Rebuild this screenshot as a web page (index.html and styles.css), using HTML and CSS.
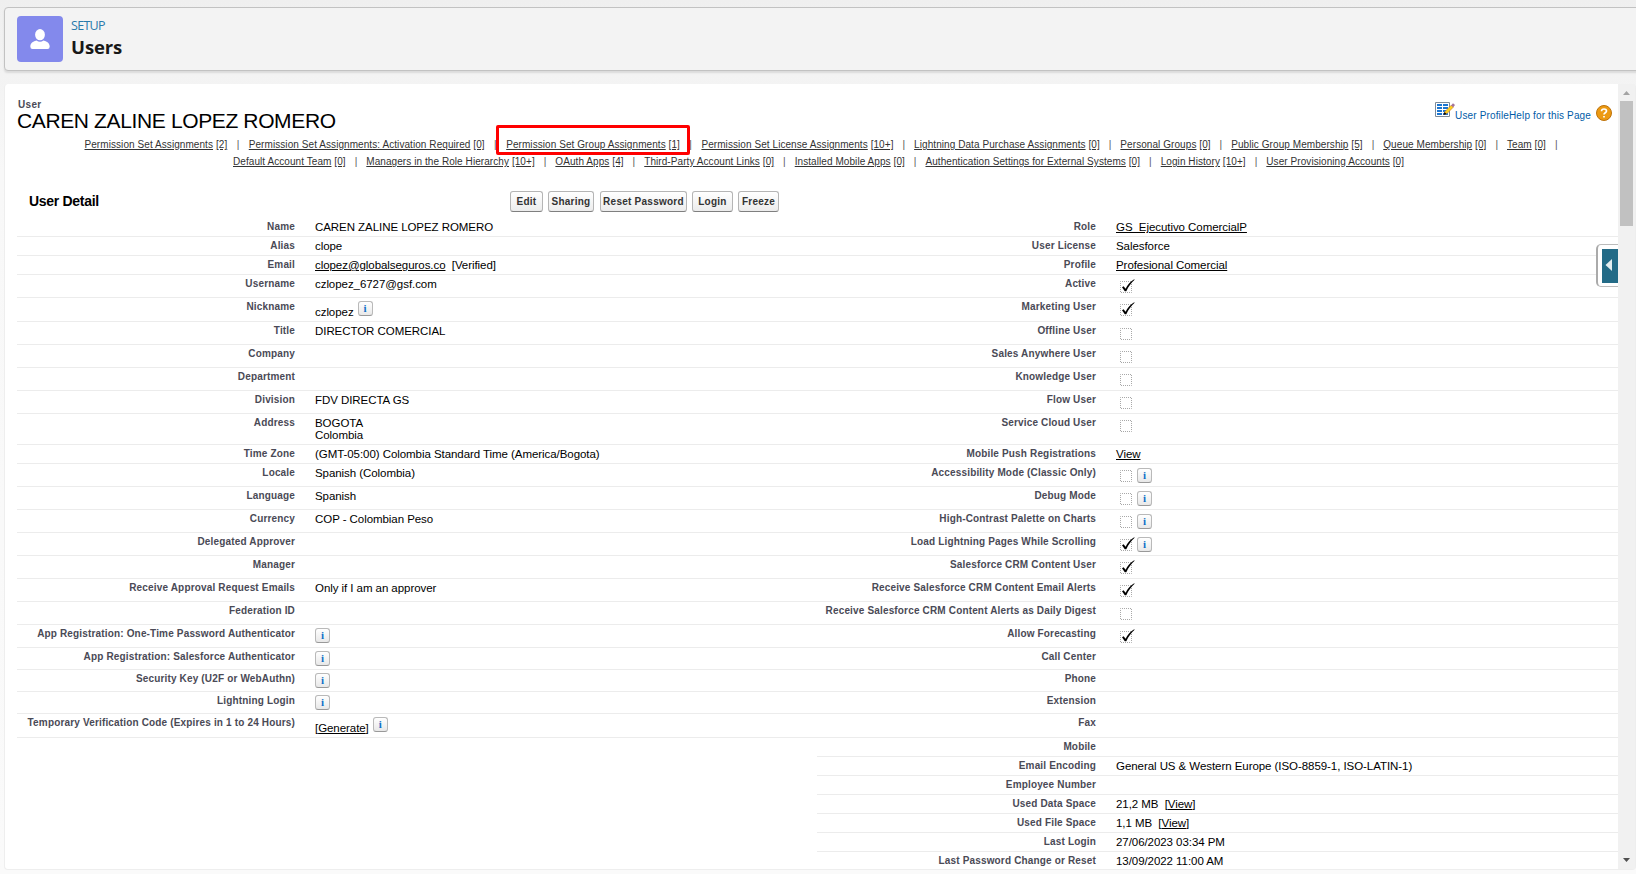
FILE: index.html
```html
<!DOCTYPE html>
<html lang="en">
<head>
<meta charset="utf-8">
<title>Users</title>
<link rel="stylesheet" href="styles.css">
</head>
<body>
<svg class="defs" width="0" height="0" aria-hidden="true">
  <symbol id="off" viewBox="0 0 21 16"><rect x="4.5" y="3.5" width="11" height="11" fill="none" stroke="#a8a8a8" stroke-dasharray="1 1" stroke-dashoffset=".5"/></symbol>
  <symbol id="on" viewBox="0 0 21 16"><rect x="4.5" y="3.5" width="11" height="11" fill="none" stroke="#a8a8a8" stroke-dasharray="1 1" stroke-dashoffset=".5"/><path d="M6 9.2 L7.6 8.2 L9.6 10.8 C11.5 6.8 14 3.6 18.2 1.2 L18.6 1.8 C15 5 12.600 8.500 10.300 13.200 L8.800 13.200 Z" fill="#000"/></symbol>
</svg>
<header class="setup">
  <svg class="setup-icon" viewBox="0 0 46 46"><ellipse cx="23" cy="18.700" rx="4.900" ry="5.600" fill="#fff"/><path d="M13.300 30.500 C13.300 26 18 25 19.500 24.500 Q23 27 26.500 24.500 C28 25 32.700 26 32.700 30.500 Q32.700 33 30.500 33 H15.500 Q13.300 33 13.300 30.500Z" fill="#fff"/></svg>
  <div class="setup-text"><span class="setup-kicker">SETUP</span><h1>Users</h1></div>
</header>
<div class="frame">
<main class="page">
  <div class="title-row">
    <div><div class="type">User</div><h2>CAREN ZALINE LOPEZ ROMERO</h2></div>
    <div class="help">
      <svg class="edit" width="20" height="16" viewBox="0 0 20 16"><path d="M.5.500h14v14H.5z" fill="#fff" stroke="#7d8a98"/><path d="M2 2h5v2H2zM8 2h5v2H8zM2 5h5v2H2zM8 5h5v2H8zM2 8h5v2H2zM8 8h4v2H8zM2 11h5v2H2zM8 11h5v2H8z" fill="#1b75d0"/><path d="M9 12.500 L10 9.500 L16.500 3 L18.500 5 L12 11.500Z" fill="#ffd21c" stroke="#c8702a" stroke-width=".6"/><path d="M16 3.500 L18 1.200 L20 3 L18.200 5.200Z" fill="#a5759b"/><path d="M8.500 13 L9.500 10 L11.500 12Z" fill="#000"/></svg>
      <a>User Profile</a><a>Help for this Page</a>
      <svg class="q" width="16" height="16" viewBox="0 0 16 16"><circle cx="8" cy="8" r="7.500" fill="#ec9a12" stroke="#bd720b"/><path d="M5.500 6.200 C5.600 3.300 10.500 3.300 10.500 6 C10.500 7.800 8 7.600 8 9.600 M8 11v1.500" fill="none" stroke="#fff" stroke-width="1.700"/></svg>
    </div>
  </div>
  <nav class="links">
    <div class="line one"><span><a>Permission Set Assignments</a> <a>[2]</a></span><i>|</i><span><a>Permission Set Assignments: Activation Required</a> <a>[0]</a></span><i>|</i><span class="marked"><a>Permission Set Group Assignments</a> <a>[1]</a></span><i>|</i><span><a>Permission Set License Assignments</a> <a>[10+]</a></span><i>|</i><span><a>Lightning Data Purchase Assignments</a> <a>[0]</a></span><i>|</i><span><a>Personal Groups</a> <a>[0]</a></span><i>|</i><span><a>Public Group Membership</a> <a>[5]</a></span><i>|</i><span><a>Queue Membership</a> <a>[0]</a></span><i>|</i><span><a>Team</a> <a>[0]</a></span><i>|</i></div>
    <div class="line two"><span><a>Default Account Team</a> <a>[0]</a></span><i>|</i><span><a>Managers in the Role Hierarchy</a> <a>[10+]</a></span><i>|</i><span><a>OAuth Apps</a> <a>[4]</a></span><i>|</i><span><a>Third-Party Account Links</a> <a>[0]</a></span><i>|</i><span><a>Installed Mobile Apps</a> <a>[0]</a></span><i>|</i><span><a>Authentication Settings for External Systems</a> <a>[0]</a></span><i>|</i><span><a>Login History</a> <a>[10+]</a></span><i>|</i><span><a>User Provisioning Accounts</a> <a>[0]</a></span></div>
  </nav>
  <div class="detail-head"><h3>User Detail</h3><div class="buttons"><button class="b1">Edit</button><button class="b2">Sharing</button><button class="b3">Reset Password</button><button class="b4">Login</button><button class="b5">Freeze</button></div></div>
  <section class="detail">
    <div class="row h19"><b>Name</b><p>CAREN ZALINE LOPEZ ROMERO</p><b>Role</b><p><a>GS_Ejecutivo ComercialP</a></p></div>
    <div class="row h19"><b>Alias</b><p>clope</p><b>User License</b><p>Salesforce</p></div>
    <div class="row h19"><b>Email</b><p><a>clopez@globalseguros.co</a>&nbsp; [Verified]</p><b>Profile</b><p><a>Profesional Comercial</a></p></div>
    <div class="row"><b>Username</b><p>czlopez_6727@gsf.com</p><b>Active</b><p class="box"><svg><use href="#on"/></svg></p></div>
    <div class="row h24"><b>Nickname</b><p class="low"><span>czlopez</span><em>i</em></p><b>Marketing User</b><p class="box"><svg><use href="#on"/></svg></p></div>
    <div class="row"><b>Title</b><p>DIRECTOR COMERCIAL</p><b>Offline User</b><p class="box"><svg><use href="#off"/></svg></p></div>
    <div class="row"><b>Company</b><p></p><b>Sales Anywhere User</b><p class="box"><svg><use href="#off"/></svg></p></div>
    <div class="row"><b>Department</b><p></p><b>Knowledge User</b><p class="box"><svg><use href="#off"/></svg></p></div>
    <div class="row"><b>Division</b><p>FDV DIRECTA GS</p><b>Flow User</b><p class="box"><svg><use href="#off"/></svg></p></div>
    <div class="row h31"><b>Address</b><p>BOGOTA<br>Colombia</p><b>Service Cloud User</b><p class="box"><svg><use href="#off"/></svg></p></div>
    <div class="row h19"><b>Time Zone</b><p>(GMT-05:00) Colombia Standard Time (America/Bogota)</p><b>Mobile Push Registrations</b><p><a>View</a></p></div>
    <div class="row"><b>Locale</b><p>Spanish (Colombia)</p><b>Accessibility Mode (Classic Only)</b><p class="box"><svg><use href="#off"/></svg><em>i</em></p></div>
    <div class="row"><b>Language</b><p>Spanish</p><b>Debug Mode</b><p class="box"><svg><use href="#off"/></svg><em>i</em></p></div>
    <div class="row"><b>Currency</b><p>COP - Colombian Peso</p><b>High-Contrast Palette on Charts</b><p class="box"><svg><use href="#off"/></svg><em>i</em></p></div>
    <div class="row"><b>Delegated Approver</b><p></p><b>Load Lightning Pages While Scrolling</b><p class="box"><svg><use href="#on"/></svg><em>i</em></p></div>
    <div class="row"><b>Manager</b><p></p><b>Salesforce CRM Content User</b><p class="box"><svg><use href="#on"/></svg></p></div>
    <div class="row"><b>Receive Approval Request Emails</b><p>Only if I am an approver</p><b>Receive Salesforce CRM Content Email Alerts</b><p class="box"><svg><use href="#on"/></svg></p></div>
    <div class="row"><b>Federation ID</b><p></p><b>Receive Salesforce CRM Content Alerts as Daily Digest</b><p class="box"><svg><use href="#off"/></svg></p></div>
    <div class="row"><b>App Registration: One-Time Password Authenticator</b><p class="low"><em>i</em></p><b>Allow Forecasting</b><p class="box"><svg><use href="#on"/></svg></p></div>
    <div class="row h22"><b>App Registration: Salesforce Authenticator</b><p class="low"><em>i</em></p><b>Call Center</b><p></p></div>
    <div class="row h22"><b>Security Key (U2F or WebAuthn)</b><p class="low"><em>i</em></p><b>Phone</b><p></p></div>
    <div class="row h22"><b>Lightning Login</b><p class="low"><em>i</em></p><b>Extension</b><p></p></div>
    <div class="row h24"><b>Temporary Verification Code (Expires in 1 to 24 Hours)</b><p class="low"><span>[<a>Generate</a>]</span><em>i</em></p><b>Fax</b><p></p></div>
    <div class="row h19 half"><b>Mobile</b><p></p></div>
    <div class="row h19 half"><b>Email Encoding</b><p>General US &amp; Western Europe (ISO-8859-1, ISO-LATIN-1)</p></div>
    <div class="row h19 half"><b>Employee Number</b><p></p></div>
    <div class="row h19 half"><b>Used Data Space</b><p>21,2 MB&nbsp; [<a>View</a>]</p></div>
    <div class="row h19 half"><b>Used File Space</b><p>1,1 MB&nbsp; [<a>View</a>]</p></div>
    <div class="row h19 half"><b>Last Login</b><p>27/06/2023 03:34 PM</p></div>
    <div class="row h19 half"><b>Last Password Change or Reset</b><p>13/09/2022 11:00 AM</p></div>
  </section>
  <div class="drawer"><div class="drawer-in"><svg width="8" height="13" viewBox="0 0 8 13"><path d="M7 0v12L.5 6z" fill="#e4eef0"/></svg></div></div>
</main>
<div class="scroll"><svg width="16" height="16"><path d="M5 11h7L8.500 7z" fill="#a3a3a3"/></svg><div class="thumb"></div><svg class="down" width="16" height="16"><path d="M5 5h7L8.500 9z" fill="#505050"/></svg></div>
</div>
</body>
</html>
```
FILE: styles.css
```css
*, *::before { box-sizing: border-box; }
html, body { height: 100%; }
body { margin: 0; padding: 7px 0 0 4px; overflow: hidden; background: linear-gradient(#efefef, #f8f8f8 170px, #fafafa); font-family: "Liberation Sans", Arial, sans-serif; color: #000; }
h1, h2, h3, p { margin: 0; font-weight: normal; }
.defs { position: absolute; }
.setup { display: flex; height: 64px; width: 1640px; padding: 8px 0 0 12px; border: 1px solid #c2c2c2; border-radius: 4px; background: #f3f3f3; box-shadow: 0 2px 2px rgba(0,0,0,.1); }
.setup-icon { width: 46px; height: 46px; border-radius: 4px; background: #8389ec; }
.setup-text { padding-left: 8px; font-family: "Open Sans", "Noto Sans", sans-serif; }
.setup-kicker { display: block; height: 18px; font-size: 12.5px; line-height: 19px; letter-spacing: -.7px; color: #2a7aab; }
h1 { font-size: 18.5px; line-height: 26px; font-weight: bold; letter-spacing: -.1px; color: #181818; }
.frame { display: flex; width: 1632px; height: 786px; margin-top: 13px; border: 1px solid #eee; border-top: 0; border-radius: 4px; background: #fff; }
.page { position: relative; flex: none; width: 1613px; overflow: hidden; padding-left: 12px; }
.title-row { display: flex; justify-content: space-between; height: 52px; padding: 14px 6px 0 0; }
.type { padding-left: 1px; font-size: 10px; line-height: 13px; font-weight: bold; letter-spacing: .3px; color: #4a4a56; }
h2 { font-size: 21px; line-height: 20px; letter-spacing: -.37px; }
.help { display: flex; font-size: 10px; line-height: 14px; letter-spacing: .14px; color: #015ba7; padding-top: 4px; }
.help a { padding-top: 7px; }
.q { margin: 3px 0 0 5px; }
.links { height: 50px; font-size: 10px; line-height: 17px; color: #333; letter-spacing: .07px; }
.line { display: flex; white-space: nowrap; }
.line.one { padding-left: 67.500px; }
.line.two { padding-left: 216px; }
.line i { width: 21.500px; text-align: center; font-style: normal; color: #555; }
.line.one i:nth-of-type(n+4), .line.two i { width: 20.600px; }
.links a, .detail a { text-decoration: underline; }
.marked { position: relative; }
.marked::before { content: ""; position: absolute; left: -10px; top: -11px; width: 194px; height: 30px; border: 3px solid #f00; border-radius: 2px; }
.detail-head { display: flex; height: 32px; }
h3 { width: 493px; padding-left: 12px; font-size: 14px; line-height: 31px; font-weight: bold; letter-spacing: -.3px; }
.buttons { display: flex; gap: 5px; padding-top: 5px; }
button { height: 21px; padding: 0; border: 1px solid #b5b5b5; border-bottom-color: #7f7f7f; border-radius: 3px; background: linear-gradient(#fff, #ececec); font: bold 10px/17px "Liberation Sans", sans-serif; letter-spacing: .25px; color: #333; }
.b1 { width: 33px; } .b2 { width: 46px; } .b3 { width: 87px; margin-left: 1px; } .b4 { width: 41px; } .b5 { width: 41px; }
.row { display: grid; grid-template-columns: 278px 522px 279px 522px; height: 23px; border-bottom: 1px solid #ececec; }
.row.h19 { height: 19px; } .row.h22 { height: 22px; } .row.h24 { height: 24px; } .row.h31 { height: 31px; }
.row.half { margin-left: 800px; grid-template-columns: 279px 522px; }
.row b { padding-top: 2px; text-align: right; font-size: 10px; line-height: 13px; letter-spacing: .16px; color: #4a4a56; white-space: nowrap; }
.row p { padding: 3px 0 0 20px; font-size: 11.500px; line-height: 12px; letter-spacing: -.06px; white-space: nowrap; }
.row p.box { display: flex; }
.box svg { width: 21px; height: 16px; }
.box em { margin-top: 1px; }
em { display: block; width: 15px; height: 15px; border: 1px solid #b9b9b9; border-bottom-color: #999; border-radius: 3px; background: linear-gradient(#fff, #e8e8e8); text-align: center; font: bold 11px/13px "Liberation Serif", serif; color: #1070c8; }
.row p.low { display: flex; }
.low span { padding-top: 5px; margin-right: 4px; }
.drawer { position: absolute; right: 0; top: 160px; width: 22px; height: 43px; padding: 4px 0 4px 4px; border: 1px solid #bbb; border-right: 0; border-left: 2px solid #aaa; border-radius: 5px 0 0 5px; background: #fff; }
.drawer-in { height: 34px; padding: 9px 0 0 3px; background: #236b87; }
.scroll { display: flex; flex-direction: column; width: 17px; background: #f1f1f1; }
.thumb { width: 13px; height: 125px; margin: 1px 0 0 2px; background: #c1c1c1; }
.down { margin-top: auto; }
```
